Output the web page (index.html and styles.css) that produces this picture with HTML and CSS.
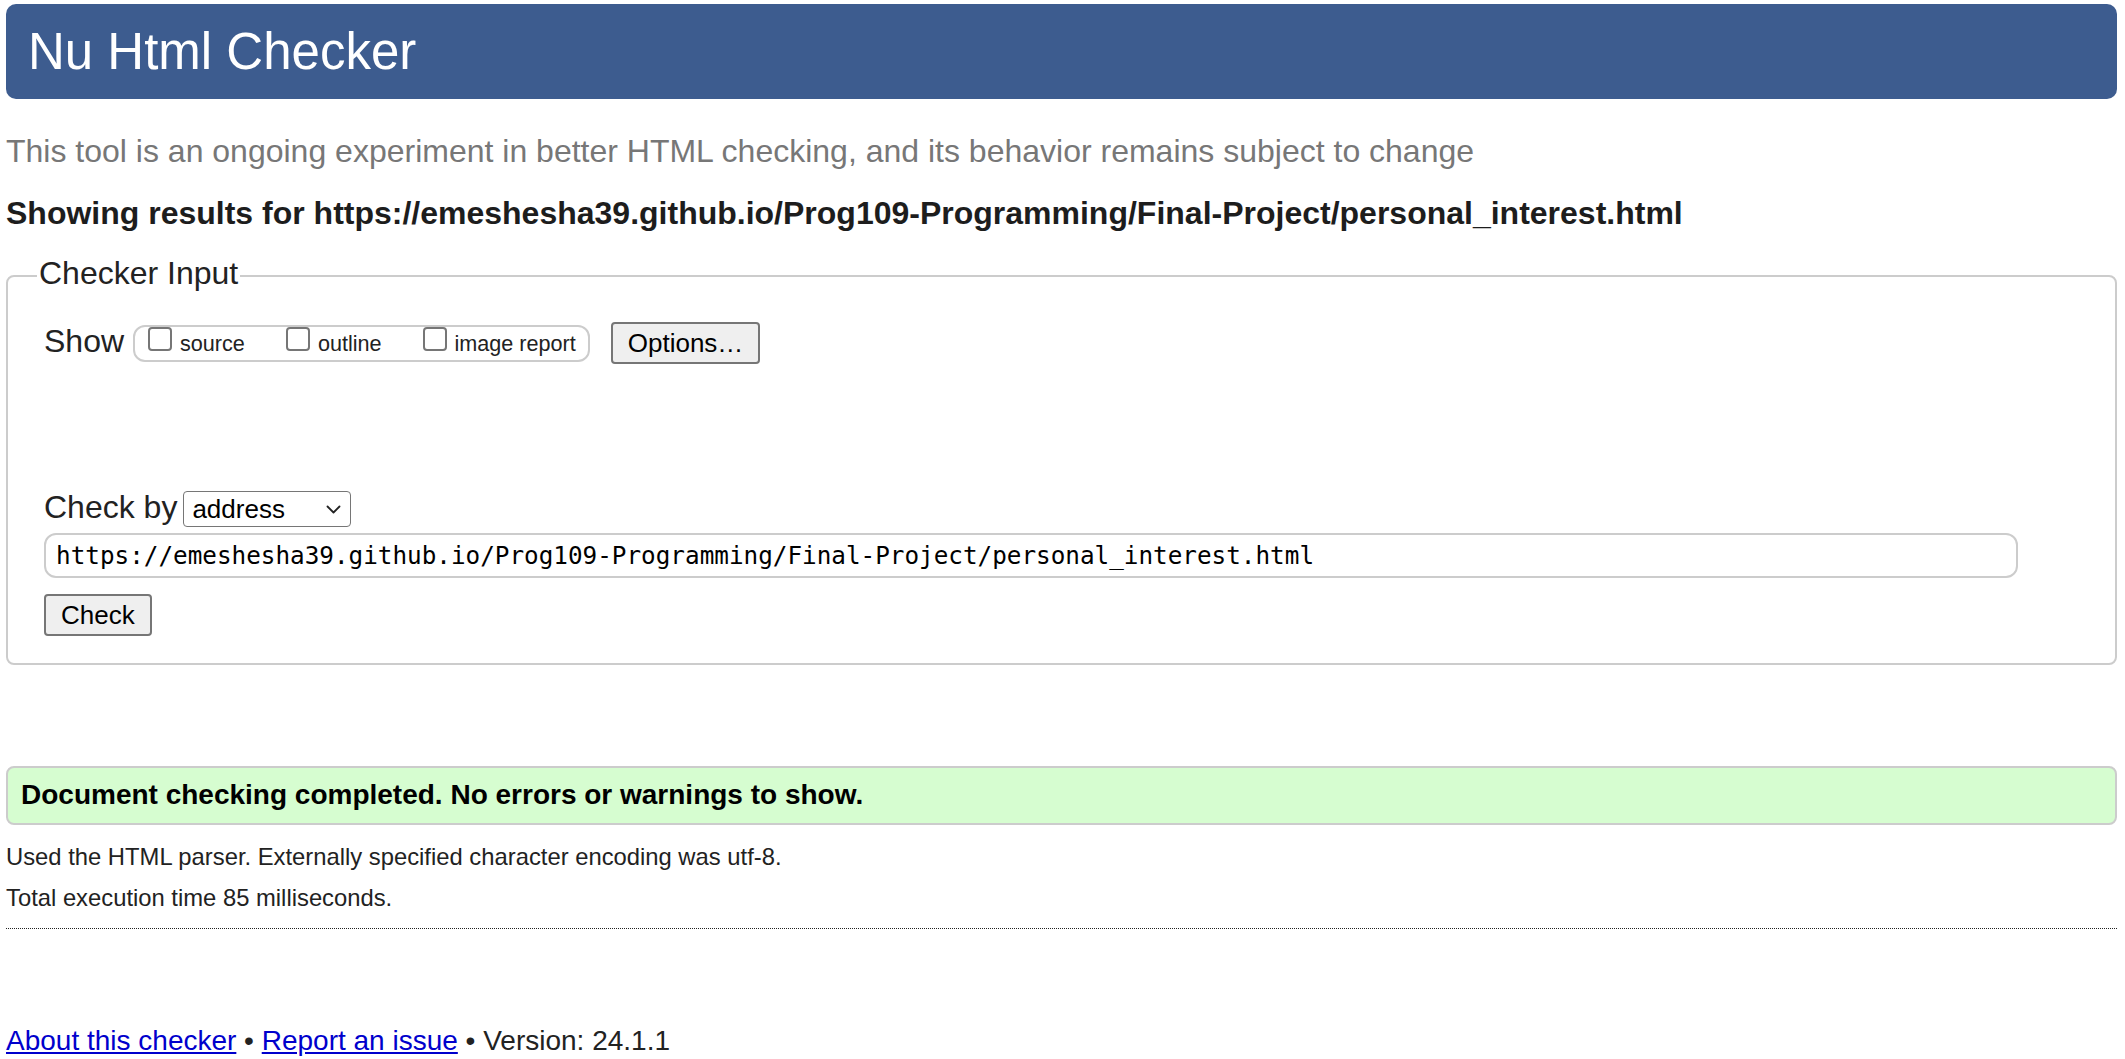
FILE: index.html
```html
<!DOCTYPE html>
<html lang="en">
<head>
<meta charset="utf-8">
<title>Nu Html Checker</title>
<link rel="stylesheet" href="styles.css">
</head>
<body>
<h1 class="title">Nu Html Checker</h1>
<p class="about">This tool is an ongoing experiment in better HTML checking, and its behavior remains subject to change</p>
<h2 class="results-for">Showing results for https://emeshesha39.github.io/Prog109-Programming/Final-Project/personal_interest.html</h2>
<form class="checker">
  <fieldset class="checker-input">
    <legend class="legend">Checker Input</legend>
    <div class="row show-row">
      <span class="big-label show-label">Show</span>
      <span class="show-group">
        <label class="opt"><input type="checkbox" class="cb"><span class="opt-text">source</span></label>
        <label class="opt"><input type="checkbox" class="cb"><span class="opt-text">outline</span></label>
        <label class="opt"><input type="checkbox" class="cb"><span class="opt-text">image report</span></label>
      </span>
      <button type="button" class="btn">Options…</button>
    </div>
    <div class="row checkby-row">
      <span class="big-label checkby-label">Check by</span>
      <span class="select"><span class="select-text">address</span><svg class="chev" width="15" height="9" viewBox="0 0 15 9"><polyline points="1.5,1.5 7.5,7.5 13.5,1.5" fill="none" stroke="#222" stroke-width="1.8" stroke-linecap="round" stroke-linejoin="round"/></svg></span>
    </div>
    <div class="row url-row">
      <input class="url" type="text" value="https://emeshesha39.github.io/Prog109-Programming/Final-Project/personal_interest.html">
    </div>
    <div class="row submit-row">
      <button type="button" class="btn">Check</button>
    </div>
  </fieldset>
</form>
<div class="success">Document checking completed. No errors or warnings to show.</div>
<p class="stats">Used the HTML parser. Externally specified character encoding was utf-8.</p>
<p class="stats">Total execution time 85 milliseconds.</p>
<hr class="rule">
<p class="footer"><a class="link" href="#">About this checker</a> • <a class="link" href="#">Report an issue</a> • Version: 24.1.1</p>
</body>
</html>
```

FILE: styles.css
```css
html {
  background: #fff;
}

body {
  margin: 0;
  padding: 4px 8px 0 6px;
  font-family: "Liberation Sans", Arial, sans-serif;
  font-size: 23.8px;
  color: #222;
}

.title {
  margin: 0;
  padding: 19px 22px 18px;
  font-size: 51px;
  line-height: 58px;
  font-weight: normal;
  color: #fff;
  background: #3d5c8f;
  border-radius: 10px;
}

.about {
  margin: 34px 0 0;
  font-size: 32px;
  line-height: 37px;
  color: #777;
}

.results-for {
  margin: 25px 0 0;
  font-size: 32px;
  line-height: 37px;
  font-weight: bold;
  color: #1d1d1d;
}

.checker {
  margin: 24px 0 0;
}

.checker-input {
  margin: 0;
  padding: 26px 36px 27px 36px;
  border: 2px solid #ccc;
  border-radius: 8px;
  min-width: 0;
}

.legend {
  margin-left: -7px;
  padding: 0 2px 6px;
  font-size: 32px;
  line-height: 34px;
  color: #222;
}

.row {
  display: flex;
  align-items: center;
}

.big-label {
  font-size: 32px;
  line-height: 36px;
  margin-bottom: 4px;
  color: #222;
}

.show-label {
  margin-right: 9px;
}

.checkby-label {
  margin-right: 6px;
}

.show-group {
  display: flex;
  align-items: flex-start;
  box-sizing: border-box;
  height: 37px;
  padding: 0 12px 0 13px;
  border: 2px solid #ccc;
  border-radius: 12px;
  margin-right: 21px;
}

.opt {
  display: flex;
  align-items: flex-start;
  margin-right: 41px;
}

.opt:last-child {
  margin-right: 0;
}

.cb {
  appearance: none;
  -webkit-appearance: none;
  box-sizing: border-box;
  margin: 0 8px 0 0;
  width: 24px;
  height: 24px;
  border: 2px solid #767676;
  border-radius: 4px;
  background: #fff;
}

.opt-text {
  font-size: 21.6px;
  line-height: 25px;
  margin-top: 4px;
  color: #222;
}

.btn {
  box-sizing: border-box;
  margin: 0;
  height: 42px;
  padding: 0 15px;
  font-family: "Liberation Sans", Arial, sans-serif;
  font-size: 26px;
  line-height: 30px;
  color: #000;
  background: #efefef;
  border: 2px solid #767676;
  border-radius: 4px;
}

.checkby-row {
  margin-top: 125px;
}

.select {
  display: flex;
  align-items: center;
  justify-content: space-between;
  box-sizing: border-box;
  width: 168px;
  height: 36px;
  padding: 0 9px 0 8px;
  border: 1px solid #767676;
  border-radius: 4px;
  font-size: 26px;
  line-height: 30px;
  color: #000;
  background: #fff;
}

.chev {
  display: block;
}

.url-row {
  margin-top: 4px;
}

.url {
  box-sizing: border-box;
  margin: 0;
  width: 1974px;
  height: 45px;
  padding: 0 10px;
  border: 2px solid #ccc;
  border-radius: 12px;
  font-family: "DejaVu Sans Mono", "Liberation Mono", monospace;
  font-size: 24.3px;
  color: #000;
  background: #fff;
  outline: none;
}

.submit-row {
  margin-top: 16px;
}

.success {
  margin-top: 101px;
  padding: 11px 13px 13px;
  border: 2px solid #ccc;
  border-radius: 8px;
  background: #d6fdd0;
  font-size: 28px;
  line-height: 31px;
  font-weight: bold;
  color: #000;
}

.stats {
  margin: 18px 0 0;
  font-size: 23.8px;
  line-height: 27px;
  color: #222;
}

.stats + .stats {
  margin-top: 14px;
}

.rule {
  margin: 17px 0 0;
  height: 0;
  border: 0;
  border-top: 1px dotted #222;
}

.footer {
  margin: 96px 0 0;
  font-size: 28px;
  line-height: 32px;
  color: #222;
}

.link {
  color: #0000cc;
}
```
